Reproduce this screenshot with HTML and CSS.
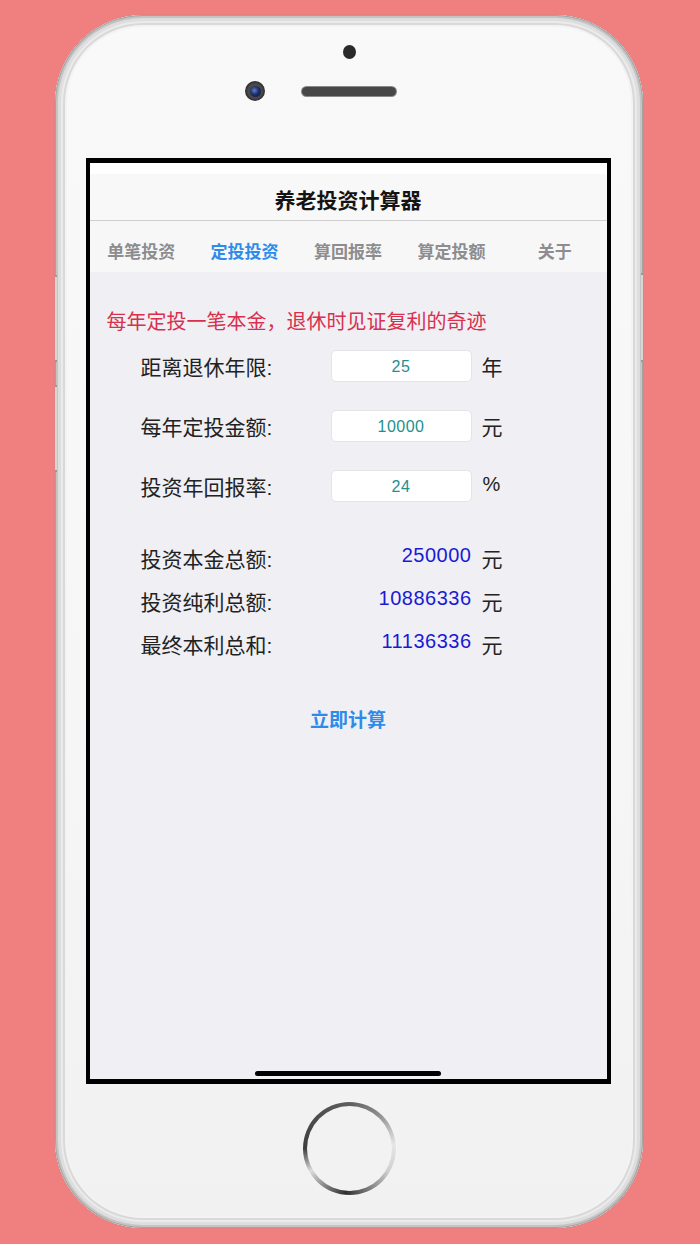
FILE: index.html
```html
<!DOCTYPE html>
<html lang="zh-CN">
<head>
<meta charset="utf-8">
<title>养老投资计算器</title>
<link rel="stylesheet" href="styles.css">
</head>
<body>
<div class="phone">
  <span class="side-btn side-left-1"></span>
  <span class="side-btn side-left-2"></span>
  <span class="side-btn side-right-1"></span>
  <div class="sensor"></div>
  <div class="cam-row">
    <div class="camera"><div class="lens"></div></div>
    <div class="speaker"></div>
    <div class="cam-spacer"></div>
  </div>
  <div class="screen">
    <div class="status"></div>
    <div class="navbar">养老投资计算器</div>
    <div class="tabs">
      <div class="tab">单笔投资</div>
      <div class="tab tab-active">定投投资</div>
      <div class="tab">算回报率</div>
      <div class="tab">算定投额</div>
      <div class="tab">关于</div>
    </div>
    <div class="content">
      <p class="slogan">每年定投一笔本金，退休时见证复利的奇迹</p>
      <div class="form">
        <div class="row">
          <span class="label">距离退休年限:</span>
          <div class="input">25</div>
          <span class="unit">年</span>
        </div>
        <div class="row">
          <span class="label">每年定投金额:</span>
          <div class="input">10000</div>
          <span class="unit">元</span>
        </div>
        <div class="row">
          <span class="label">投资年回报率:</span>
          <div class="input">24</div>
          <span class="unit unit-pct">%</span>
        </div>
      </div>
      <div class="results">
        <div class="res-row">
          <span class="label">投资本金总额:</span>
          <span class="value">250000</span>
          <span class="unit">元</span>
        </div>
        <div class="res-row">
          <span class="label">投资纯利总额:</span>
          <span class="value">10886336</span>
          <span class="unit">元</span>
        </div>
        <div class="res-row">
          <span class="label">最终本利总和:</span>
          <span class="value">11136336</span>
          <span class="unit">元</span>
        </div>
      </div>
      <div class="calc">立即计算</div>
      <div class="home-indicator"></div>
    </div>
  </div>
  <div class="home-btn"><div class="home-inner"></div></div>
</div>
</body>
</html>
```
FILE: styles.css
```css
* { box-sizing: border-box; }
html, body { margin: 0; padding: 0; }
body {
  width: 700px;
  height: 1244px;
  overflow: hidden;
  background: #f08080;
  font-family: "Liberation Sans", "Noto Sans CJK SC", sans-serif;
}
.phone {
  position: relative;
  width: 588px;
  height: 1213px;
  margin: 15px 0 0 55px;
  border-radius: 88px;
  background: linear-gradient(#f9f9f9, #f6f6f6 60%, #f1f1f1);
  box-shadow:
    inset 0 0 0 1px #a3a3a3,
    inset 0 0 0 3px #c4c4c4,
    inset 0 0 0 6px #dedede,
    inset 0 0 0 8px #ebebeb,
    inset 0 0 0 10px #d9d9d9,
    inset 0 0 0 12px #f3f3f3,
    0 0 1px #888;
  display: flex;
  flex-direction: column;
  align-items: center;
  padding-top: 30px;
}
.side-btn {
  position: absolute;
  width: 2px;
  background: #d6d6d6;
  border-top: 2px solid #9a9a9a;
  border-bottom: 2px solid #9a9a9a;
}
.side-left-1 { left: 0; top: 260px; height: 87px; }
.side-left-2 { left: 0; top: 370px; height: 87px; }
.side-right-1 { right: 0; top: 258px; height: 89px; }
.sensor {
  width: 13px;
  height: 14px;
  border-radius: 50%;
  background: #2a2a2a;
}
.cam-row {
  display: flex;
  align-items: center;
  gap: 37px;
  margin-top: 22px;
  height: 20px;
}
.camera {
  width: 20px;
  height: 20px;
  border-radius: 50%;
  background: radial-gradient(circle, #4a4a4a 50%, #2a2a2a 70%, #777 100%);
  display: flex;
  align-items: center;
  justify-content: center;
}
.lens {
  width: 11px;
  height: 11px;
  border-radius: 50%;
  background: radial-gradient(circle at 40% 40%, #5f7fc4 0%, #1d2f6a 45%, #0c1430 100%);
}
.speaker {
  width: 94px;
  height: 9px;
  border-radius: 5px;
  background: #474747;
  box-shadow: 0 0 0 1px #8a8a8a;
}
.cam-spacer { width: 20px; height: 1px; }
.screen {
  margin-top: 57px;
  margin-left: -2px;
  width: 525px;
  height: 926px;
  border: solid #000;
  border-width: 5px 4px;
  background: #efeff4;
  display: flex;
  flex-direction: column;
}
.status { height: 11px; background: #ffffff; }
.navbar {
  height: 47px;
  background: #f8f8f8;
  border-bottom: 1px solid #cfcfcf;
  display: flex;
  align-items: center;
  justify-content: center;
  font-size: 21px;
  font-weight: 700;
  color: #141414;
  padding-top: 3px;
}
.tabs {
  height: 51px;
  background: #f7f7f7;
  display: flex;
  padding-top: 7px;
}
.tab {
  flex: 1;
  display: flex;
  align-items: center;
  justify-content: center;
  font-size: 17px;
  font-weight: 700;
  color: #8d8d8f;
}
.tab-active { color: #2d8ceb; }
.content {
  flex: 1;
  display: flex;
  flex-direction: column;
  padding-top: 36px;
}
.slogan {
  margin: 0 0 0 17px;
  font-size: 20px;
  line-height: 28px;
  color: #d9304e;
}
.form {
  margin-top: 14px;
  padding-left: 51px;
  display: flex;
  flex-direction: column;
  gap: 28px;
}
.row, .res-row {
  display: flex;
  align-items: center;
  height: 32px;
}
.label {
  width: 190px;
  font-size: 21px;
  color: #222;
  flex-shrink: 0;
}
.input {
  width: 141px;
  height: 32px;
  background: #fff;
  border: 1px solid #e3e3e8;
  border-radius: 5px;
  display: flex;
  align-items: center;
  justify-content: center;
  font-size: 16px;
  letter-spacing: 0.5px;
  color: #23908f;
  padding-top: 2px;
}
.unit {
  margin-left: 10px;
  font-size: 21px;
  color: #222;
}
.unit-pct { font-size: 20px; margin-top: -4px; margin-left: 11px; }
.results {
  margin-top: 34px;
  padding-left: 51px;
  display: flex;
  flex-direction: column;
}
.res-row { height: 43px; }
.value {
  width: 141px;
  text-align: right;
  font-size: 20px;
  letter-spacing: 0.5px;
  color: #1a1ad4;
  margin-bottom: 4px;
}
.calc {
  margin-top: 41px;
  align-self: center;
  line-height: 30px;
  font-size: 19px;
  font-weight: 700;
  color: #2d8ceb;
}
.home-indicator {
  margin-top: auto;
  margin-bottom: 3px;
  align-self: center;
  width: 186px;
  height: 5px;
  border-radius: 3px;
  background: #000;
}
.home-btn {
  margin-top: 18px;
  width: 93px;
  height: 93px;
  border-radius: 50%;
  background: conic-gradient(#5e5e5e 0deg, #8c8c8c 40deg, #e6e6e6 85deg, #d0d0d0 120deg, #707070 160deg, #2e2e2e 185deg, #8a8a8a 215deg, #dcdcdc 240deg, #3e3e3e 270deg, #4c4c4c 310deg, #5e5e5e 360deg);
  box-shadow: 0 0 2px #ffffff;
  display: flex;
  align-items: center;
  justify-content: center;
}
.home-inner {
  width: 85px;
  height: 85px;
  border-radius: 50%;
  background: #f2f2f2;
}
```
